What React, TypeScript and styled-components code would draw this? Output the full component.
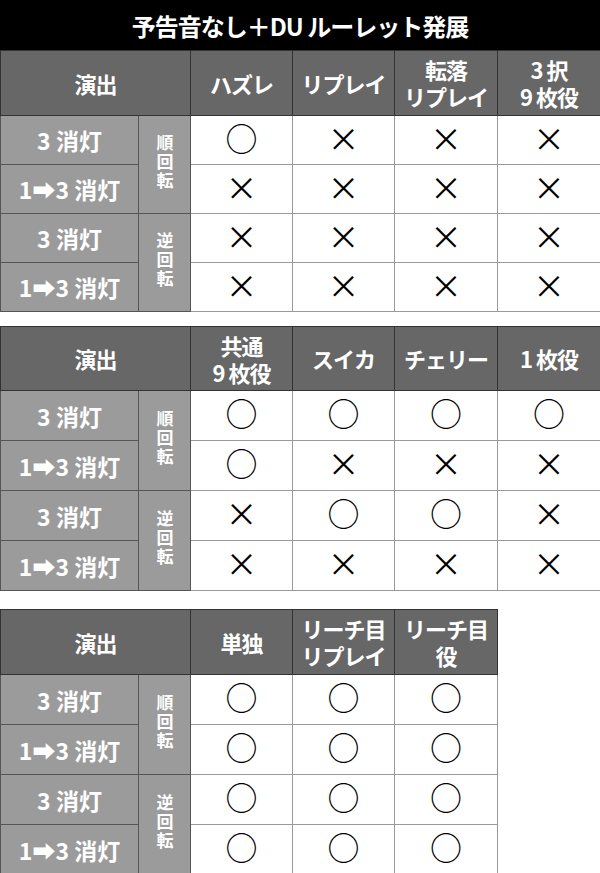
import React from "react";
import styled, {createGlobalStyle} from "styled-components";

type Mark = "o" | "x";

interface ISection {
	heads: string[];
	rows: Mark[][];
	gap: number;
	headHeight: number;
	rowHeight: number;
}

const sections: ISection[] = [
	{
		heads: ["ハズレ", "リプレイ", "転落\nリプレイ", "3 択\n9 枚役"],
		rows: [
			["o", "x", "x", "x"],
			["x", "x", "x", "x"],
			["x", "x", "x", "x"],
			["x", "x", "x", "x"],
		],
		gap: 0,
		headHeight: 65,
		rowHeight: 49,
	},
	{
		heads: ["共通\n9 枚役", "スイカ", "チェリー", "1 枚役"],
		rows: [
			["o", "o", "o", "o"],
			["o", "x", "x", "x"],
			["x", "o", "o", "x"],
			["x", "x", "x", "x"],
		],
		gap: 14,
		headHeight: 64,
		rowHeight: 50,
	},
	{
		heads: ["単独", "リーチ目\nリプレイ", "リーチ目\n役"],
		rows: [
			["o", "o", "o"],
			["o", "o", "o"],
			["o", "o", "o"],
			["o", "o", "o"],
		],
		gap: 18,
		headHeight: 65,
		rowHeight: 50,
	},
];

const labels = ["3 消灯", "1➡3 消灯", "3 消灯", "1➡3 消灯"];
const widths = [102, 102, 103, 103];

export default function App() {
	return (
		<Page>
			<GlobalStyle />
			<Title>予告音なし＋DU ルーレット発展</Title>
			{sections.map((s, si) => (
				<Table
					key={si}
					$gap={s.gap}
					$width={190 + widths.slice(0, s.heads.length).reduce((a, b) => a + b, 0)}>
					<colgroup>
						<col style={{width: 138}} />
						<col style={{width: 52}} />
						{s.heads.map((_, i) => (
							<col key={i} style={{width: widths[i]}} />
						))}
					</colgroup>
					<thead>
						<Row $height={s.headHeight}>
							<HeadCell colSpan={2}>演出</HeadCell>
							{s.heads.map((h, i) => (
								<HeadCell key={i}>{h}</HeadCell>
							))}
						</Row>
					</thead>
					<tbody>
						{s.rows.map((row, ri) => (
							<Row key={ri} $height={s.rowHeight}>
								<LabelCell>{labels[ri]}</LabelCell>
								{ri % 2 === 0 && (
									<SpinCell rowSpan={2}>
										<Vertical>{ri === 0 ? "順回転" : "逆回転"}</Vertical>
									</SpinCell>
								)}
								{row.map((m, mi) => (
									<MarkCell key={mi}>
										{m === "o" ? <Circle>○</Circle> : <Cross>×</Cross>}
									</MarkCell>
								))}
							</Row>
						))}
					</tbody>
				</Table>
			))}
		</Page>
	);
}

const GlobalStyle = createGlobalStyle`
	html, body {
		margin: 0;
		padding: 0;
		background: #fff;
	}
	body {
		font-family: "Noto Sans CJK JP", "Noto Sans", "DejaVu Sans", sans-serif;
	}
`;

const Page = styled.div`
	width: 600px;
	display: flex;
	flex-direction: column;
`;

const Title = styled.div`
	height: 50px;
	background: #000;
	color: #fff;
	display: flex;
	align-items: center;
	justify-content: center;
	font-size: 24px;
	font-weight: 700;
	letter-spacing: -1px;
`;

const Table = styled.table<{$gap: number; $width: number}>`
	border-collapse: collapse;
	table-layout: fixed;
	width: ${(p) => p.$width}px;
	margin-top: ${(p) => p.$gap}px;
`;

const Row = styled.tr<{$height: number}>`
	height: ${(p) => p.$height}px;
`;

const HeadCell = styled.th`
	background: #676767;
	color: #fff;
	border: 1px solid #333;
	padding: 0;
	font-size: 22px;
	font-weight: 700;
	line-height: 27px;
	letter-spacing: -1px;
	text-align: center;
	vertical-align: middle;
	white-space: pre;
`;

const LabelCell = styled.td`
	background: #9b9b9b;
	color: #fff;
	border: 1px solid #555;
	padding: 0;
	font-size: 23px;
	font-weight: 700;
	text-align: center;
	vertical-align: middle;
	white-space: nowrap;
`;

const SpinCell = styled.td`
	background: #9b9b9b;
	border: 1px solid #555;
	padding: 0;
	text-align: center;
	vertical-align: middle;
`;

const Vertical = styled.div`
	display: inline-block;
	writing-mode: vertical-rl;
	text-orientation: upright;
	color: #fff;
	font-size: 17px;
	font-weight: 700;
	line-height: 20px;
	letter-spacing: 2px;
`;

const MarkCell = styled.td`
	background: #fff;
	border: 1px solid #999;
	padding: 0;
	text-align: center;
	vertical-align: middle;
	color: #000;
	font-weight: 400;
	line-height: 30px;
`;

const Circle = styled.span`
	font-size: 32px;
`;

const Cross = styled.span`
	font-size: 32px;
`;
